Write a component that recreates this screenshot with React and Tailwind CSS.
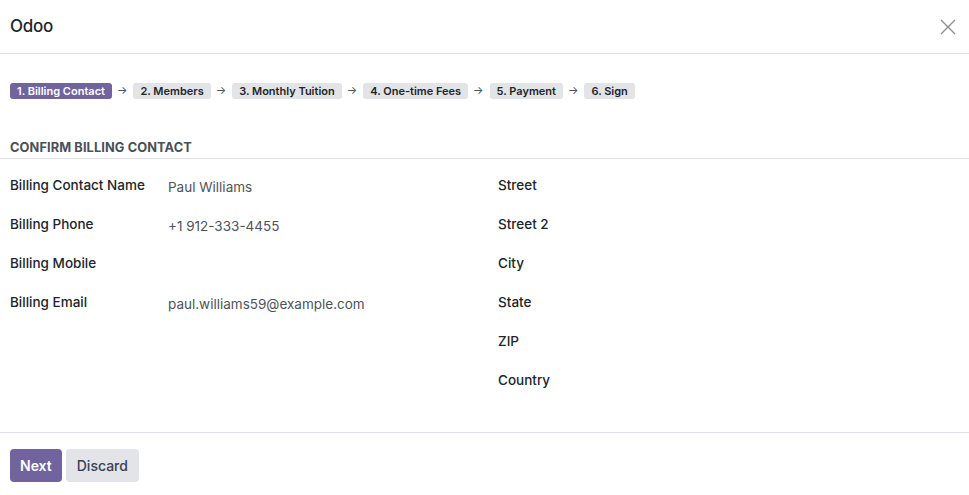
import React from 'react';

const steps = ['1. Billing Contact', '2. Members', '3. Monthly Tuition', '4. One-time Fees', '5. Payment', '6. Sign'];

const leftFields = [
    { label: 'Billing Contact Name', value: 'Paul Williams' },
    { label: 'Billing Phone', value: '+1 912-333-4455' },
    { label: 'Billing Mobile', value: '' },
    { label: 'Billing Email', value: 'paul.williams59@example.com' },
];

const rightFields = ['Street', 'Street 2', 'City', 'State', 'ZIP', 'Country'];

export default function App() {
    return (
        <div className="w-[969px] h-[495px] bg-white text-[#212529] flex flex-col" style={{ fontFamily: 'Inter, "Noto Sans", sans-serif' }}>
            {/* 헤더 */}
            <div className="h-[54px] flex items-center justify-between px-[10px] border-b border-[#dee2e6] shrink-0">
                <h1 className="text-[17px] font-medium tracking-[-0.3px]">Odoo</h1>
                <button className="text-[#8a8d91] mr-[3px]">
                    <svg width="16" height="16" viewBox="0 0 16 16" fill="none" stroke="currentColor" strokeWidth="1.4">
                        <path d="M1 1 L15 15 M15 1 L1 15" />
                    </svg>
                </button>
            </div>

            {/* 단계 표시 */}
            <div className="flex items-start px-[10px] pt-[29px] h-[83px] shrink-0">
                {steps.map((step, i) => (
                    <React.Fragment key={step}>
                        {i > 0 && <span className="text-[11px] leading-[14px] text-[#495057] ml-[5px] mr-[6px]">→</span>}
                        <span className={`h-[16px] leading-[16px] px-[7px] rounded-[3px] text-[11px] font-semibold ${i === 0 ? 'bg-[#71639e] text-white' : 'bg-[#e2e4e8] text-[#212529]'}`}>
                            {step}
                        </span>
                    </React.Fragment>
                ))}
            </div>

            {/* 본문 */}
            <div className="flex-1">
                <div className="px-[10px] pt-[3px] pb-[2px] border-b border-[#dee2e6]">
                    <h2 className="text-[12.8px] leading-[16px] font-bold text-[#495057] tracking-[0.1px]">CONFIRM BILLING CONTACT</h2>
                </div>
                <div className="flex px-[10px] pt-[16px]">
                    <div className="w-[488px]">
                        {leftFields.map((f) => (
                            <div key={f.label} className="flex h-[39px]">
                                <div className="w-[158px] text-[13.5px] font-medium leading-[20px]">{f.label}</div>
                                <div className="text-[13.5px] text-[#4e535a] leading-[20px] mt-[2px]">{f.value}</div>
                            </div>
                        ))}
                    </div>
                    <div>
                        {rightFields.map((f) => (
                            <div key={f} className="h-[39px] text-[13.5px] font-medium leading-[20px]">{f}</div>
                        ))}
                    </div>
                </div>
            </div>

            {/* 하단 버튼 */}
            <div className="border-t border-[#dee2e6] px-[10px] pt-[16px] pb-[13px] flex gap-[4px] shrink-0">
                <button className="h-[33px] px-[10px] rounded-[4px] bg-[#71639e] text-white text-[14px] font-semibold">Next</button>
                <button className="h-[33px] px-[11px] rounded-[4px] bg-[#e2e4e8] text-[#374151] text-[14px] font-medium">Discard</button>
            </div>
        </div>
    );
}
